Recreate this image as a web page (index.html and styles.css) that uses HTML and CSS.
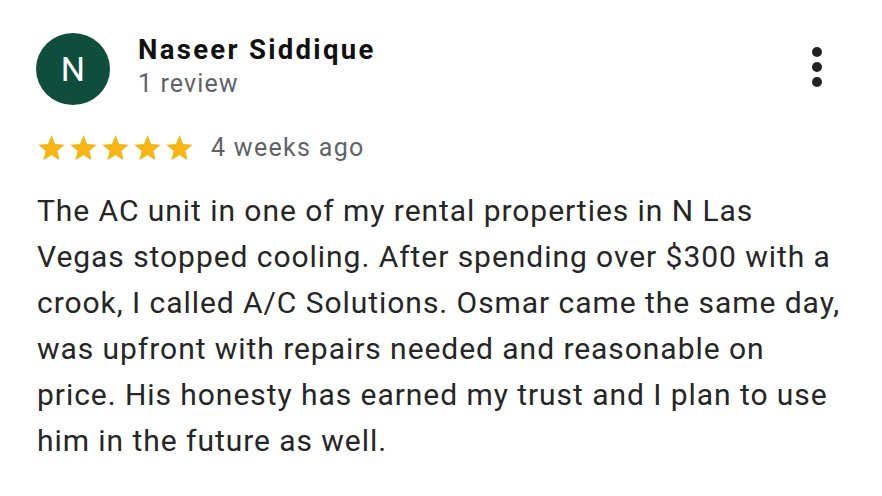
FILE: index.html
```html
<!DOCTYPE html>
<html>
<head>
<meta charset="utf-8">
<link rel="stylesheet" href="styles.css">
</head>
<body>
<div class="review">
  <div class="header">
    <div class="avatar">N</div>
    <div class="who">
      <div class="name">Naseer Siddique</div>
      <div class="count">1 review</div>
    </div>
    <div class="menu">
      <svg width="12" height="40" viewBox="0 0 12 40"><circle cx="6" cy="5" r="5" fill="#222"/><circle cx="6" cy="20" r="5" fill="#222"/><circle cx="6" cy="35" r="5" fill="#222"/></svg>
    </div>
  </div>
  <div class="rating">
    <div class="stars">
      <svg class="star" viewBox="0 0 24 24"><path d="M12 1.8l3.1 7.2 7.8.7-5.9 5.2 1.8 7.6L12 18.5l-6.8 4 1.8-7.6-5.9-5.2 7.8-.7z"/></svg>
      <svg class="star" viewBox="0 0 24 24"><path d="M12 1.8l3.1 7.2 7.8.7-5.9 5.2 1.8 7.6L12 18.5l-6.8 4 1.8-7.6-5.9-5.2 7.8-.7z"/></svg>
      <svg class="star" viewBox="0 0 24 24"><path d="M12 1.8l3.1 7.2 7.8.7-5.9 5.2 1.8 7.6L12 18.5l-6.8 4 1.8-7.6-5.9-5.2 7.8-.7z"/></svg>
      <svg class="star" viewBox="0 0 24 24"><path d="M12 1.8l3.1 7.2 7.8.7-5.9 5.2 1.8 7.6L12 18.5l-6.8 4 1.8-7.6-5.9-5.2 7.8-.7z"/></svg>
      <svg class="star" viewBox="0 0 24 24"><path d="M12 1.8l3.1 7.2 7.8.7-5.9 5.2 1.8 7.6L12 18.5l-6.8 4 1.8-7.6-5.9-5.2 7.8-.7z"/></svg>
    </div>
    <span class="when">4 weeks ago</span>
  </div>
  <p class="text">The AC unit in one of my rental properties in N Las<br>Vegas stopped cooling. After spending over $300 with a<br>crook, I called A/C Solutions. Osmar came the same day,<br>was upfront with repairs needed and reasonable on<br>price. His honesty has earned my trust and I plan to use<br>him in the future as well.</p>
</div>
</body>
</html>
```
FILE: styles.css
```css
html, body {
  margin: 0;
  padding: 0;
  background: #fff;
}
body {
  font-family: Roboto, "Noto Sans", sans-serif;
  width: 882px;
  height: 496px;
  overflow: hidden;
}
.review {
  padding: 33px 20px 0 36px;
}
.header {
  display: flex;
  align-items: flex-start;
}
.avatar {
  width: 74px;
  height: 72px;
  border-radius: 50%;
  background: #0f4d3c;
  color: #fff;
  font-size: 34px;
  display: flex;
  align-items: center;
  justify-content: center;
  flex: none;
}
.who {
  margin-left: 28px;
  flex: 1;
}
.name {
  font-size: 27.5px;
  font-weight: 700;
  color: #111;
  line-height: 34px;
  letter-spacing: 2.3px;
}
.count {
  font-size: 25px;
  color: #5f6368;
  line-height: 34px;
  letter-spacing: 1.1px;
}
.menu {
  margin-top: 14px;
  margin-right: 39px;
}
.rating {
  display: flex;
  align-items: center;
  margin-top: 28px;
}
.stars {
  display: flex;
  gap: 3px;
  margin-left: 1px;
}
.star {
  width: 29px;
  height: 29px;
  fill: #f6b817;
}
.when {
  margin-left: 17px;
  font-size: 25px;
  color: #5f6368;
  letter-spacing: 1.3px;
}
.text {
  margin: 26px 0 0 1px;
  font-size: 30px;
  line-height: 46px;
  color: #262626;
  letter-spacing: 0.95px;
  white-space: nowrap;
}
```
